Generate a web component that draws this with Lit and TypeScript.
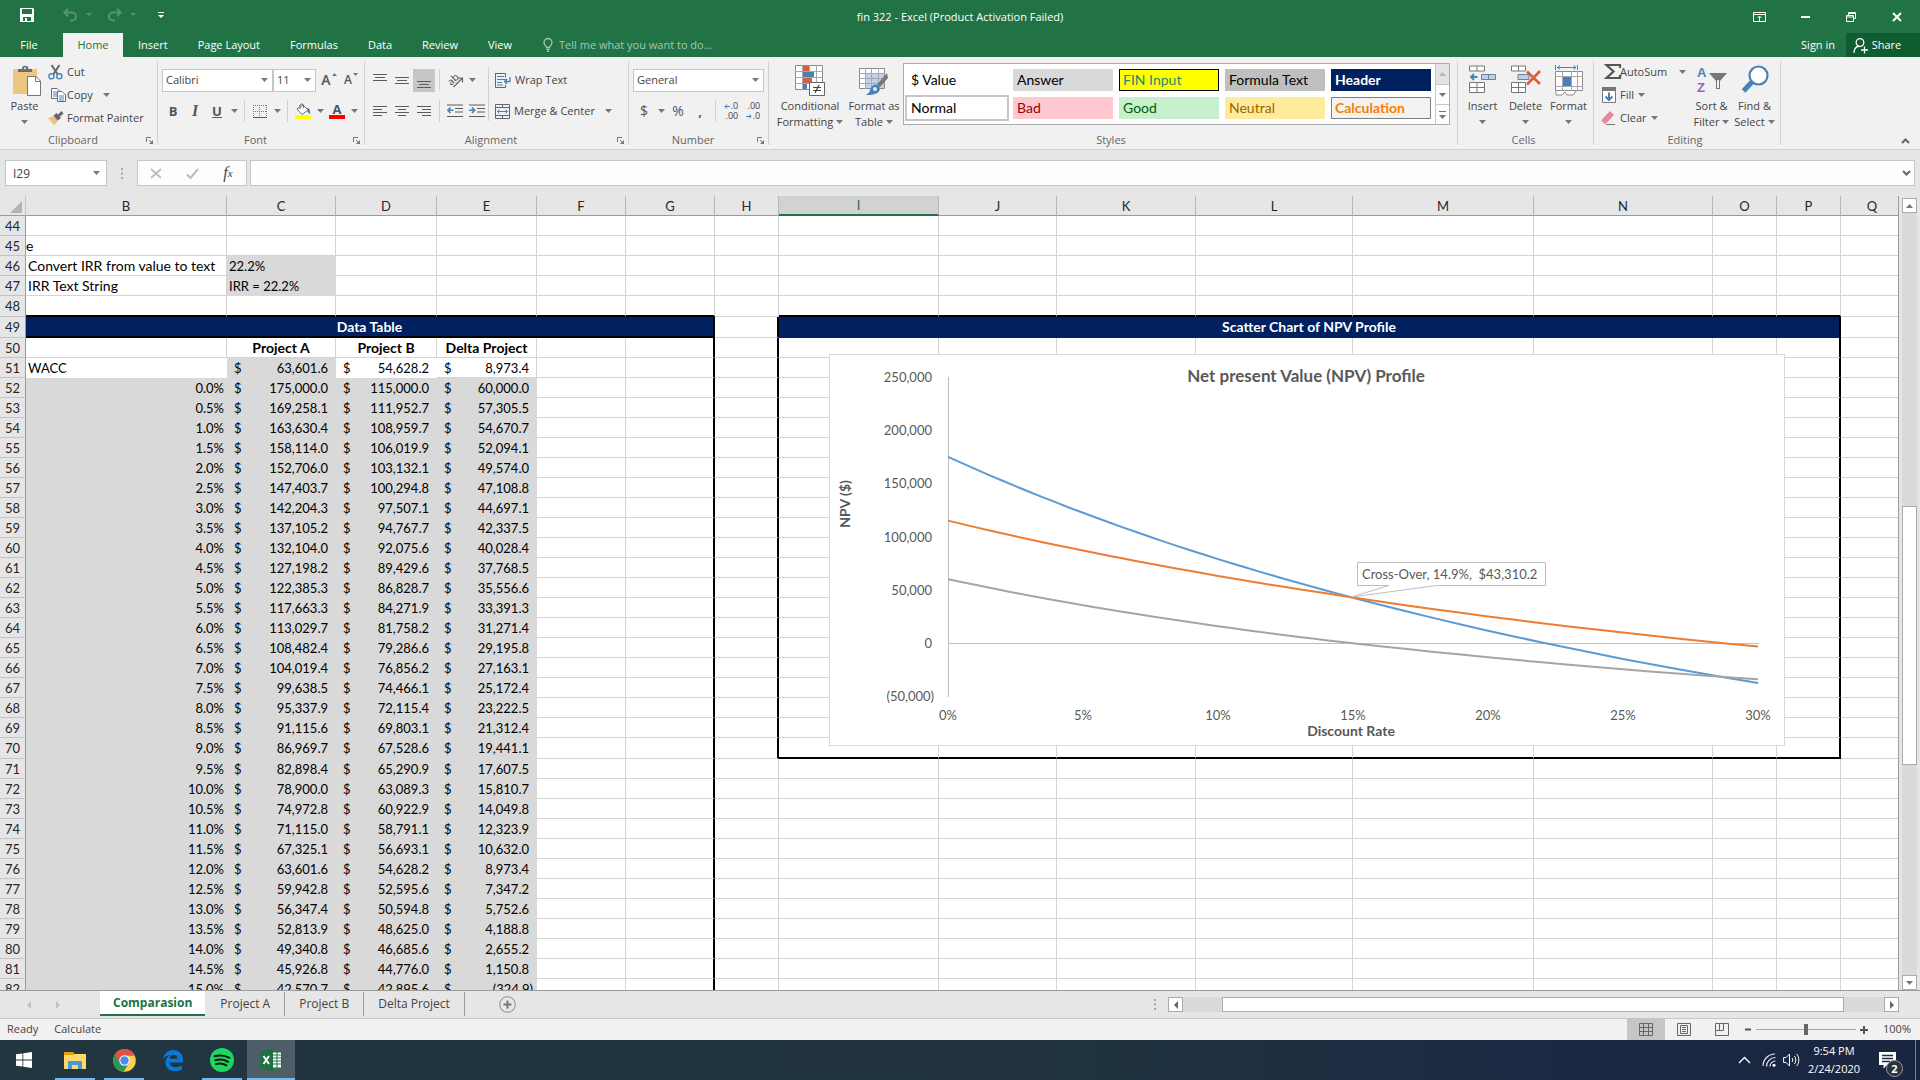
import { LitElement, html, svg, css, nothing } from "lit";
import { customElement } from "lit/decorators.js";
import { classMap } from "lit/directives/class-map.js";

const pic = (w: number, h: number, body: unknown) =>
  html`<svg class="pic" width=${w} height=${h} viewBox="0 0 ${w} ${h}" fill="none" aria-hidden="true">${body}</svg>`;

const G = "#6a6a6a";
const B = "#4a80b8";
const arrow = pic(7, 4, svg`<path d="M0 0h7L3.5 4z" fill="#777"/>`);
const lines = (spec: number[][], h = 17) =>
  pic(16, h, svg`${spec.map(([x, y, w]) => svg`<rect x=${x} y=${y} width=${w} height="1" fill="#5c5c5c"/>`)}`);

const I = {
  save: pic(14, 14, svg`<path fill-rule="evenodd" fill="#fff" d="M0 0h13l1 1v13H0zM2 1v5h10V1zM3 9v4h2v-3h2v3h4V9z"/>`),
  undo: pic(15, 13, svg`<path d="M1 4.5h8a4 4 0 0 1 0 8H7M5 .8L1.3 4.5 5 8.2" stroke="#569372" stroke-width="2"/>`),
  redo: pic(15, 13, svg`<path d="M14 4.5H6a4 4 0 0 0 0 8h2M10 .8l3.700 3.700L10 8.200" stroke="#569372" stroke-width="2"/>`),
  dimArrow: pic(6, 3, svg`<path d="M0 0h6L3 3z" fill="#569372"/>`),
  custom: pic(6, 6, svg`<path d="M0 0h6v1H0zM0 3h6L3 6z" fill="#fff"/>`),
  display: pic(13, 10, svg`<path d="M.5.5h12v9H.5zM.5 2.500h12M6.500 9V4.500M4.500 6l2-2 2 2" stroke="#fff"/>`),
  min: pic(9, 2, svg`<path d="M0 0h9v2H0z" fill="#fff"/>`),
  restore: pic(10, 10, svg`<path d="M.5 3.500h7v6h-7zM.5 5h7M2.500 3V.5h7v6H8M2.500 1.500h7" stroke="#fff"/>`),
  close: pic(10, 10, svg`<path d="M1 1l8 8M9 1L1 9" stroke="#fff" stroke-width="2"/>`),
  bulb: pic(10, 14, svg`<path d="M3.500 9.500C3.500 8 1 7 1 4.500a4 4 0 0 1 8 0C9 7 6.500 8 6.500 9.500zM3.500 11.500h3M4 13.400h2" stroke="#a2c9b2" stroke-width="1.300"/>`),
  person: pic(15, 15, svg`<circle cx="7" cy="4.500" r="3.800" stroke="#fff" stroke-width="1.300"/><path d="M1 15c0-4 2-6.500 5-6.700M8 12h7M11.500 8.500v7" stroke="#fff" stroke-width="1.300"/>`),
  paste: pic(30, 31, svg`<path d="M1 4h24v25H1z" fill="#edc77f"/><path d="M6 7V4h4a3.200 3.200 0 0 1 6.400 0H20v3z" fill="#6d6d6d"/><circle cx="13" cy="3.300" r="1" fill="#f1f1f1"/><path d="M15.500 11.500h8.500l4.500 4.500v14.500h-13z" fill="#fff" stroke="#777"/><path d="M23.500 11.500v5h5" stroke="#777"/>`),
  cut: pic(15, 16, svg`<path d="M3.500 1l6 9M11.500 1l-6 9" stroke="#666" stroke-width="2"/><circle cx="3.500" cy="12.300" r="2.600" stroke=${B} stroke-width="1.400"/><circle cx="11.300" cy="12.300" r="2.600" stroke=${B} stroke-width="1.400"/>`),
  copy: pic(15, 14, svg`<path d="M.5.5h5.500l3 3v7H.5z" fill="#fff" stroke=${G}/><path d="M2 4h4M2 6h4M2 8h4" stroke=${B}/><path d="M6.500 3.500h4.500l3.500 3.500v6.500h-8z" fill="#fff" stroke=${G}/><path d="M8 8h5M8 10h5M8 12h5" stroke=${B}/>`),
  painter: pic(16, 14, svg`<path d="M0 7l6-2 4 5-4 4z" fill="#edc084"/><path d="M5.500 4.500l3-2.500 4.500 5-3.500 2.500z" fill="#666"/><path d="M9.500 4l4-4 2 2.500-4.500 4z" fill="#666"/>`),
  borders: pic(14, 13, svg`<path d="M.5 0v12M6.500 0v12M13.500 0v12M0 .5h14M0 6.500h14" stroke="#777" stroke-dasharray="1 1"/><path d="M0 12.500h14" stroke="#555"/>`),
  fill: pic(16, 16, svg`<path d="M2 6l6-4 5 5-6 4.500z" fill="#fff" stroke="#666"/><path d="M5 6V2a2 2 0 0 1 3.500 0v3" stroke="#666"/><path d="M12 5c3 0 3.500 3 3 6-1.500-.5-2-2-3-3z" fill=${B}/><path d="M0 12h16v4H0z" fill="#ff0"/>`),
  orient: pic(17, 16, svg`<path d="M6.500 15L15 6.500M11 6h4.500v4.500" stroke="#666" stroke-width="1.200"/><text x="1" y="12" transform="rotate(-45 5 9)" font-size="10" font-family="Open Sans, sans-serif" fill="#444">ab</text>`),
  outdent: pic(16, 14, svg`<path d="M0 1h16M8 4.500h8M8 8h8M0 12.500h16" stroke="#5c5c5c"/><path d="M6.500 6.300H1M3.500 3.500L.8 6.300l2.700 2.700" stroke=${B} stroke-width="1.600"/>`),
  indent: pic(16, 14, svg`<path d="M0 1h16M8 4.500h8M8 8h8M0 12.500h16" stroke="#5c5c5c"/><path d="M0 6.300h5.500M3 3.500l2.700 2.800L3 9" stroke=${B} stroke-width="1.600"/>`),
  wrap: pic(16, 15, svg`<path d="M.5.500h10v4M.5 0v14.500h10V12" stroke="#666"/><path d="M2 3.500h7M2 6.500h9M2 9.500h5M2 12h6" stroke=${B}/><path d="M15 4v4.500H9.500M12 6L9.500 8.500 12 11" stroke=${B} stroke-width="1.300"/>`),
  merge: pic(15, 15, svg`<path d="M.5.500h14v14H.5zM.5 3.500h14M.5 11.500h14M7.500 0v3.500M7.500 11.500V15" stroke="#666"/><path d="M2.500 7.500h10M4.500 5.500l-2 2 2 2M10.500 5.500l2 2-2 2" stroke=${B}/>`),
  launcher: pic(7, 7, svg`<path d="M.5 5V.5H5M3 3l3 3" stroke="#777"/><path d="M7 3v4H3z" fill="#777"/>`),
  cond: pic(30, 31, svg`<path d="M.5.500h27v24H.5z" fill="#fff" stroke="#8a8a8a"/><path d="M7.500 0v25M14.500 0v25M21.500 0v25M0 6.500h28M0 12.500h28M0 18.500h28" stroke="#a8a8a8"/><path d="M8 1h6v5H8zM8 13h9v5H8z" fill="#d95f3c"/><path d="M8 7h11v5H8zM8 19h4v5H8z" fill=${B}/><path d="M14.500 17.500h15v13h-15z" fill="#fff" stroke="#666"/><path d="M18 22.500h8M18 25.500h8M24 20l-4 8" stroke="#444" stroke-width="1.200"/>`),
  fmtTable: pic(30, 31, svg`<path d="M.5 3.500h25v20H.5z" fill="#fff" stroke="#8a8a8a"/><path d="M7 9h18v14H7z" fill="#bdd2ea"/><path d="M6.500 3v21M12.500 3v21M19.500 3v21M0 8.500h26M0 13.500h26M0 18.500h26" stroke="#a0a8b0"/><path d="M28 8l1 5-8 9-3-2.500z" fill="#777"/><path d="M17 19.500c3 1 4.500 3 3.500 6-2 4-9 5-14 4.500 3-1 4-3 5-6 1-3 3-4.500 5.500-4.500z" fill=${B}/><circle cx="16" cy="24" r="2" fill="#dce9f6"/>`),
  insert: pic(27, 28, svg`<path d="M.5 1h15v5H.5zM8 1v5M.5 17.500h15v10H.5zM8 17.500v10M.5 22.500h15" fill="#fff" stroke="#777"/><path d="M12.500 9.500h14v5h-14zM19.500 9.500v5" fill="#bdd2ea" stroke="#6a7f99"/><path d="M8.500 12H2M5 9l-3 3 3 3" stroke=${B} stroke-width="1.800"/>`),
  del: pic(30, 28, svg`<path d="M.5 1h14v5H.5zM7.500 1v5M.5 17.500h14v10H.5zM7.500 17.500v10M.5 22.500h14" fill="#fff" stroke="#777"/><path d="M7 9.500h11v5H7z" fill="#bdd2ea" stroke="#6a7f99"/><path d="M16 6.500l13 12.500M29 6L16 19.500" stroke="#dc5c3c" stroke-width="2.600"/>`),
  format: pic(28, 31, svg`<path d="M.5 0v5M22.500 0v5M2 2.500h19M5 .5l-2.500 2L5 4.500M18.500.5l2.500 2-2.500 2" stroke=${B}/><path d="M.5 6.500h27v19H.5z" fill="#fff" stroke="#8a8a8a"/><path d="M7.500 6v20M16.500 6v20M22.500 6v20M0 11.500h28M0 21.500h28" stroke="#a8a8a8"/><path d="M8 12h8v9H8z" fill=${B}/><path d="M1 26v4h6l3-3 2 3h6l3-4" fill="#fff" stroke="#8a8a8a"/>`),
  sigma: pic(16, 15, svg`<path d="M15 4V1H1.500l7 6.500-7 6.500H15v-3" stroke="#555" stroke-width="2.200"/>`),
  fillDown: pic(14, 16, svg`<path d="M.5.500h13v15H.5z" fill="#fff" stroke="#777"/><path d="M0 0h14v4H0z" fill="#777"/><path d="M7 5.500v7.500M3.500 9.500L7 13l3.500-3.500" stroke=${B} stroke-width="2"/>`),
  clear: pic(15, 14, svg`<path d="M0 9.500L9 0l4 4-8.500 9H3z" fill="#e8869b"/><path d="M0 9.500l4 3.500" stroke="#f6c5cf"/><path d="M5 13.500h9" stroke="#777"/>`),
  sort: pic(30, 31, svg`<text x="0" y="12" font-size="13" font-weight="700" font-family="Liberation Sans, sans-serif" fill=${B}>A</text><text x="0" y="27" font-size="13" font-weight="700" font-family="Liberation Sans, sans-serif" fill="#9465b8">Z</text><path d="M12 8h18l-7 8v8h-4v-8z" fill="#777"/><path d="M20 15h2v8h-2z" fill="#f1f1f1"/>`),
  find: pic(28, 31, svg`<circle cx="17.500" cy="10.500" r="9" fill="#fff" stroke=${B} stroke-width="2.200"/><path d="M11 17L2.500 26" stroke=${B} stroke-width="5"/>`),
  chevUp: pic(9, 6, svg`<path d="M1 5l3.500-3.500L8 5" stroke="#666" stroke-width="2"/>`),
  chevDown: pic(9, 6, svg`<path d="M1 1l3.500 3.500L8 1" stroke="#666" stroke-width="2"/>`),
  cancel: pic(12, 11, svg`<path d="M1 1l10 9M11 1L1 10" stroke="#bdbdbd" stroke-width="1.800"/>`),
  check: pic(13, 11, svg`<path d="M1 6.500L4.500 10 12 1" stroke="#bdbdbd" stroke-width="2"/>`),
  up: pic(7, 4, svg`<path d="M0 4h7L3.500 0z" fill="#777"/>`),
  upDim: pic(7, 4, svg`<path d="M0 4h7L3.500 0z" fill="#b8b8b8"/>`),
  more: pic(7, 8, svg`<path d="M0 0h7v1H0zM0 4h7L3.500 8z" fill="#777"/>`),
  left: pic(4, 8, svg`<path d="M4 0v8L0 4z" fill="#666"/>`),
  right: pic(4, 8, svg`<path d="M0 0v8l4-4z" fill="#666"/>`),
  leftDim: pic(4, 8, svg`<path d="M4 0v8L0 4z" fill="#c0c0c0"/>`),
  rightDim: pic(4, 8, svg`<path d="M0 0v8l4-4z" fill="#c0c0c0"/>`),
  dots: pic(2, 11, svg`<path d="M0 0h2v2H0zM0 4.500h2v2H0zM0 9h2v2H0z" fill="#a6a6a6"/>`),
  plus: pic(17, 17, svg`<circle cx="8.500" cy="8.500" r="7.800" stroke="#888"/><path d="M8.500 4.500v8M4.500 8.500h8" stroke="#777" stroke-width="2"/>`),
  zoomOut: pic(7, 7, svg`<path d="M0 3.500h6" stroke="#555" stroke-width="2"/>`),
  zoomIn: pic(8, 8, svg`<path d="M0 4h8M4 0v8" stroke="#555" stroke-width="2"/>`),
  viewGrid: pic(14, 13, svg`<path d="M.5.500h13v12H.5zM.5 4.500h13M.5 8.500h13M4.500.5v12M9.500.5v12" stroke="#666"/>`),
  viewPage: pic(14, 13, svg`<path d="M.5.500h13v12H.5zM3.500 2.500h7v8h-7zM5 4.500h4M5 6.500h4M5 8.500h4" stroke="#666"/>`),
  viewBreak: pic(14, 13, svg`<path d="M.5.500h13v12H.5zM.5 7.500h8V.5M4.500.5v7" stroke="#666"/>`),
  windows: pic(16, 16, svg`<path fill="#fff" d="M0 2.300l6.500-.9v6.200H0zM7.300 1.300L16 0v7.600H7.300zM0 8.400h6.500v6.200L0 13.700zM7.300 8.400H16V16l-8.700-1.200z"/>`),
  folder: pic(22, 19, svg`<path d="M0 1h9l1 2h12v15H0z" fill="#ffd869"/><path d="M0 1h9l1 3H0z" fill="#e0a00f"/><path d="M4 18v-7a1 1 0 0 1 1-1h12a1 1 0 0 1 1 1v7h-4v-4H8v4z" fill="#4699d9"/>`),
  chrome: pic(23, 23, svg`<circle cx="11.500" cy="11.500" r="11.300" fill="#fcce4a"/><path d="M11.500 11.500L1.600 6A11.300 11.300 0 0 0 10.500 22.700L16 14z" fill="#25995a"/><path d="M1.600 6a11.300 11.300 0 0 1 20.300.8H11.500l-4.500 7z" fill="#de5145"/><circle cx="11.500" cy="11.500" r="5.200" fill="#fff"/><circle cx="11.500" cy="11.500" r="4.200" fill="#4a8af4"/>`),
  edge: pic(20, 21, svg`<path fill="#0a78d6" d="M0 9.500C.8 3.800 4.800 0 10.300 0 16.300 0 20 4.200 20 10v2.500H6.500c.2 3.300 3 4.700 6.300 4.700 2.200 0 4.200-.6 6-1.600v4c-2 1-4.300 1.500-7 1.500-5.600 0-9.300-3.300-9.300-8.300 0-3.600 1.800-6.300 5-7.800C3.900 5.500 1.400 7 0 9.500zM6.600 8.800h7.900c0-2.600-1.300-4.100-3.700-4.100-2.300 0-3.900 1.500-4.200 4.100z"/>`),
  spotify: pic(24, 24, svg`<circle cx="12" cy="12" r="12" fill="#1ed760"/><path d="M4.500 8.300c5-1.500 10.500-1 15 1.500M5.300 12.300c4.300-1.200 9-.7 12.800 1.500M6 16c3.700-1 7.500-.5 10.500 1.300" stroke="#0c1a12" stroke-width="2" stroke-linecap="round"/>`),
  excel: pic(22, 22, svg`<path d="M12 3h9.500v16H12z" fill="#fff" stroke="#217346"/><path d="M13 6h8M13 9h8M13 12h8M13 15h8M17 3v16" stroke="#217346"/><path d="M0 2.500L13 0v22L0 19.500z" fill="#1e7145"/><path d="M3.500 7l5.500 8M9 7l-5.500 8" stroke="#fff" stroke-width="1.900"/>`),
  trayUp: pic(13, 8, svg`<path d="M1 7l5.500-5.500L12 7" stroke="#fff" stroke-width="1.300"/>`),
  wifi: pic(14, 14, svg`<path d="M1 13A12 12 0 0 1 13 1M4.500 13.500a9 9 0 0 1 9-9M8 13.500a5.500 5.500 0 0 1 5.500-5.500" stroke="#e6e9ee" stroke-width="1.200"/><circle cx="12" cy="12.300" r="1.500" fill="#fff"/>`),
  sound: pic(17, 14, svg`<path d="M.6 4.500h2.500L6.500 1v12L3.100 9.500H.6z" stroke="#fff"/><path d="M9 5c1 1.200 1 2.800 0 4M11.300 3c2 2.300 2 5.700 0 8M13.600 1c3 3.300 3 8.700 0 12" stroke="#fff"/>`),
  note: pic(17, 17, svg`<path d="M0 0h17v13H8l-3.500 3.500V13H0z" fill="#fff"/><path d="M3 3.500h11M3 6.500h11M3 9.500h8" stroke="#1c2b40" stroke-width="1.300"/>`),
};

const RATES: [string, string, string, string][] = [
  ["0.0%", "175,000.0", "115,000.0", "60,000.0"],
  ["0.5%", "169,258.1", "111,952.7", "57,305.5"],
  ["1.0%", "163,630.4", "108,959.7", "54,670.7"],
  ["1.5%", "158,114.0", "106,019.9", "52,094.1"],
  ["2.0%", "152,706.0", "103,132.1", "49,574.0"],
  ["2.5%", "147,403.7", "100,294.8", "47,108.8"],
  ["3.0%", "142,204.3", "97,507.1", "44,697.1"],
  ["3.5%", "137,105.2", "94,767.7", "42,337.5"],
  ["4.0%", "132,104.0", "92,075.6", "40,028.4"],
  ["4.5%", "127,198.2", "89,429.6", "37,768.5"],
  ["5.0%", "122,385.3", "86,828.7", "35,556.6"],
  ["5.5%", "117,663.3", "84,271.9", "33,391.3"],
  ["6.0%", "113,029.7", "81,758.2", "31,271.4"],
  ["6.5%", "108,482.4", "79,286.6", "29,195.8"],
  ["7.0%", "104,019.4", "76,856.2", "27,163.1"],
  ["7.5%", "99,638.5", "74,466.1", "25,172.4"],
  ["8.0%", "95,337.9", "72,115.4", "23,222.5"],
  ["8.5%", "91,115.6", "69,803.1", "21,312.4"],
  ["9.0%", "86,969.7", "67,528.6", "19,441.1"],
  ["9.5%", "82,898.4", "65,290.9", "17,607.5"],
  ["10.0%", "78,900.0", "63,089.3", "15,810.7"],
  ["10.5%", "74,972.8", "60,922.9", "14,049.8"],
  ["11.0%", "71,115.0", "58,791.1", "12,323.9"],
  ["11.5%", "67,325.1", "56,693.1", "10,632.0"],
  ["12.0%", "63,601.6", "54,628.2", "8,973.4"],
  ["12.5%", "59,942.8", "52,595.6", "7,347.2"],
  ["13.0%", "56,347.4", "50,594.8", "5,752.6"],
  ["13.5%", "52,813.9", "48,625.0", "4,188.8"],
  ["14.0%", "49,340.8", "46,685.6", "2,655.2"],
  ["14.5%", "45,926.8", "44,776.0", "1,150.8"],
  ["15.0%", "42,570.7", "42,895.6", "(324.9)"],
];

/* Values of each series at 15, 20, 25 and 30 percent, for the part below the listed rates. */
const TAILS = [
  [42570.7, 11600, -14900, -37500],
  [42895.6, 25000, 9800, -3400],
  [-324.9, -13400, -24700, -34100],
];
const SERIES_COLOR = ["#5b9bd5", "#ed7d31", "#a5a5a5"];

const toNumber = (s: string) =>
  s.startsWith("(") ? -Number(s.replace(/[(),]/g, "")) : Number(s.replace(/,/g, ""));

const cubic = (v: number[], t: number) =>
  v.reduce((sum, y, i) => {
    let k = y;
    for (let j = 0; j < 4; j++) if (j !== i) k *= (t - j) / (i - j);
    return sum + k;
  }, 0);

const px = (rate: number) => 118 + rate * 27;
const py = (npv: number) => 288 - (npv / 50000) * 53.2;

function seriesPoints(n: number): string {
  const pts = RATES.map((r, i) => `${px(i / 2)},${py(toNumber(r[n + 1])).toFixed(1)}`);
  for (let r = 16; r <= 30; r++) pts.push(`${px(r)},${py(cubic(TAILS[n], (r - 15) / 5)).toFixed(1)}`);
  return pts.join(" ");
}

const COLS: [string, number][] = [
  ["B", 201], ["C", 109], ["D", 101], ["E", 100], ["F", 89], ["G", 89], ["H", 64], ["I", 160],
  ["J", 118], ["K", 139], ["L", 157], ["M", 181], ["N", 179], ["O", 64], ["P", 64], ["Q", 0],
];

@customElement("npv-chart")
export class NpvChart extends LitElement {
  static styles = css`
    :host { display: block; background: #fff; border: 1px solid #d9d9d9; box-sizing: border-box; }
    svg { display: block; }
    text { font-family: Lato, "Liberation Sans", sans-serif; font-size: 13px; fill: #595959; }
    .title { font-size: 17px; font-weight: 700; }
    .axis { font-weight: 700; font-size: 14px; }
  `;

  render() {
    const ticks = [250000, 200000, 150000, 100000, 50000, 0];
    return html`<svg width="954" height="390" viewBox="0 0 954 390" role="img" aria-label="Net present Value (NPV) Profile">
      <path d="M118.500 22v320M119 288.500h810" stroke="#bfbfbf" fill="none"/>
      ${ticks.map((t) => svg`<text x="102" y=${Math.round(py(t)) + 5} text-anchor="end">${t.toLocaleString("en-US")}</text>`)}
      <text x="104" y="346" text-anchor="end">(50,000)</text>
      ${[0, 5, 10, 15, 20, 25, 30].map((t) => svg`<text x=${px(t)} y="365" text-anchor="middle">${t}%</text>`)}
      <text class="axis" x="521" y="381" text-anchor="middle">Discount Rate</text>
      <text class="axis" x="0" y="0" transform="translate(20 149) rotate(-90)" text-anchor="middle">NPV ($)</text>
      <text class="title" x="476" y="27" text-anchor="middle">Net present Value (NPV) Profile</text>
      ${[0, 1, 2].map((n) => svg`<polyline points=${seriesPoints(n)} fill="none" stroke=${SERIES_COLOR[n]} stroke-width="2"/>`)}
      <path d="M527.500 207.500h188v23h-109L521.500 242l37.500-11.500h-31.500z" fill="#fff" stroke="#bfbfbf"/>
      <text x="532" y="224" xml:space="preserve">Cross-Over, 14.9%,  $43,310.2</text>
    </svg>`;
  }
}

@customElement("app-root")
export class AppRoot extends LitElement {
  static styles = css`
    :host {
      display: flex; flex-direction: column; height: 100vh; overflow: hidden;
      font: 12px/16px "Open Sans", "Liberation Sans", sans-serif; color: #444; background: #e6e6e6;
    }
    * { box-sizing: border-box; }
    .pic { display: block; flex: none; overflow: visible; }
    button { font: inherit; color: inherit; background: none; border: 0; padding: 0; margin: 0; display: flex; align-items: center; justify-content: center; white-space: nowrap; }
    input, select { font: inherit; color: inherit; border: 0; border-radius: 0; background: transparent; padding: 0; margin: 0; appearance: none; outline: 0; min-width: 0; }
    .grow { flex: 1; }

    .title { flex: none; height: 33px; background: #217346; color: #fff; display: grid; grid-template-columns: 1fr auto 1fr; align-items: center; font-size: 11px; }
    .quick { display: flex; align-items: center; padding: 0 0 4px 20px; height: 28px; gap: 15px; }
    .pair { display: flex; align-items: center; gap: 8px; }
    .quick .wide { margin-left: 14px; }
    .quick .last { margin-left: 7px; }
    .wins { display: flex; justify-content: flex-end; }
    .wins button { width: 46px; height: 28px; }
    .tabs { flex: none; height: 24px; background: #217346; color: #fff; display: flex; font-size: 11px; }
    .tabs button { padding: 0 15px; }
    .tabs .file { width: 63px; padding: 0 5px 0 0; }
    .tabs .home { background: #f1f1f1; color: #217346; width: 60px; padding: 0; }
    .tell { display: flex; align-items: center; gap: 6px; padding-left: 16px; color: #a2c9b2; }
    .tell input { width: 220px; }
    .tell input::placeholder { color: #a2c9b2; opacity: 1; }
    .tabs .share { background: #0e5c2f; width: 74px; gap: 4px; padding: 0 12px 0 0; }
    .tabs .sign { padding: 0 11px; }

    .ribbon { flex: none; height: 93px; background: #f1f1f1; border-bottom: 1px solid #d2d2d2; display: flex; padding: 4px 0; font-size: 11px; }
    .group { flex: none; border-right: 1px solid #d2d2d2; display: flex; flex-direction: column; }
    .body { display: flex; height: 75px; }
    .foot { display: flex; height: 10px; line-height: 10px; color: #666; padding-right: 4px; }
    .foot span { flex: 1; text-align: center; }
    .w-clip { width: 158px; } .w-font { width: 207px; } .w-align { width: 264px; } .w-num { width: 140px; }
    .w-style { width: 689px; } .w-cells { width: 136px; } .w-edit { width: 187px; }
    .w-cells .body { padding-left: 3px; }
    .w-clip .body { padding-left: 4px; }
    .big { flex-direction: column; justify-content: flex-start; padding-top: 4px; }
    .big .art { height: 33px; display: flex; }
    .big .line { display: flex; align-items: center; gap: 3px; height: 16px; }
    .b41 { width: 41px; } .b43 { width: 43px; } .b82 { width: 82px; } .b50 { width: 46px; }
    .rows { display: flex; flex-direction: column; }
    .small { height: 23px; gap: 4px; justify-content: flex-start; padding-bottom: 2px; }
    .small .slot { width: 15px; display: flex; justify-content: center; }
    .clip-rows { padding-left: 3px; }
    .copy .pic:last-child { margin-left: 6px; }
    .sum .pic:last-child { margin-left: 8px; }
    .two { display: flex; flex-direction: column; gap: 7px; padding-top: 7px; }
    .line2 { display: flex; align-items: center; height: 24px; }
    .t { width: 22px; height: 23px; }
    .a { width: 12px; height: 23px; }
    .on { background: #c6c6c6; }
    .sep { width: 1px; height: 22px; background: #d2d2d2; margin: 0 4px 0 0; }
    .sep.gap { margin: 0 4px; }
    .tall { width: 1px; height: 54px; margin: 6px 6px 0 0; background: #d2d2d2; }
    .glyph { font-size: 13px; font-weight: 700; color: #555; }
    .thin { font-weight: 400; font-size: 14px; }
    .i { font-style: italic; font-family: "Liberation Serif", serif; font-size: 16px; }
    .u { text-decoration: underline; }
    .inkA { display: flex; flex-direction: column; align-items: center; line-height: 12px; width: 16px; border-bottom: 4px solid #f00; font-weight: 700; font-size: 13px; color: #555; }
    .grown { align-items: flex-start; gap: 1px; color: #555; font-weight: 600; }
    .g1 { font-size: 14px; line-height: 22px; } .g2 { font-size: 12px; line-height: 22px; }
    .combo { display: grid; grid-template-columns: 1fr; align-items: center; height: 23px; background: #fff; border: 1px solid #c6c6c6; color: #444; }
    .combo > * { grid-area: 1 / 1; }
    .combo .pic { justify-self: end; margin-right: 4px; pointer-events: none; }
    .combo select, .combo input { width: 100%; height: 100%; padding-left: 3px; }
    .c-font { width: 111px; } .c-size { width: 43px; margin-right: 2px; } .c-num { width: 131px; }
    .font-two, .num-two { padding-left: 4px; }
    .p4 { padding-left: 4px; }
    .mg { gap: 4px; height: 24px; padding: 0; }
    .mg .pic:last-child:not(:first-child) { margin-left: 6px; }
    .dec { font-size: 9px; line-height: 8px; display: grid; justify-content: center; align-content: center; gap: 2px; color: #444; }
    .dec .row { display: flex; align-items: center; justify-content: flex-end; gap: 1px; height: 8px; }

    .gallery { margin: 2px 0 0 6px; height: 62px; display: flex; border: 1px solid #ababab; background: #fff; }
    .swatches { display: grid; grid-template-columns: repeat(5, 100px); grid-auto-rows: 22px; gap: 6px; padding: 5px 4px 0 3px; }
    .sw { justify-content: flex-start; padding-left: 4px; font: 14px/20px Lato, sans-serif; color: #000; }
    .answer { background: #d9d9d9; }
    .fin { background: #ff0; border: 1px solid #000; color: #1f8a70; padding-left: 3px; }
    .formula { background: #bfbfbf; }
    .header { background: #002060; color: #fff; font-weight: 700; }
    .normal { outline: 2px solid #c6c6c6; }
    .bad { background: #ffc7ce; color: #9c0006; }
    .good { background: #c6efce; color: #006100; }
    .neutral { background: #ffeb9c; color: #9c6500; }
    .calc { background: #f2f2f2; border: 1px solid #7f7f7f; color: #fa7d00; font-weight: 700; padding-left: 3px; }
    .galnav { width: 14px; display: grid; grid-template-rows: 1fr 1fr 1fr; border-left: 1px solid #c6c6c6; }
    .galnav button + button { border-top: 1px solid #c6c6c6; }
    .galnav .off { background: #e3e3e3; }
    .edit-rows { padding-left: 7px; width: 96px; }
    .collapse { align-self: flex-end; margin-left: auto; padding: 0 10px 1px 0; }

    .fbar { flex: none; display: flex; padding: 10px 5px; height: 46px; align-items: stretch; color: #444; }
    .name { width: 102px; height: 26px; padding-left: 4px; }
    .name .pic { margin-right: 6px; }
    .fdots { width: 30px; display: flex; align-items: center; justify-content: center; }
    .fx { width: 110px; background: #fdfdfd; border: 1px solid #c6c6c6; display: flex; margin-right: 3px; }
    .fx button { flex: 1; }
    .fx .f { font: italic 400 16px/20px "Liberation Serif", serif; color: #444; }
    .fx sub { font-size: 11px; line-height: 8px; }
    .entry { flex: 1; display: flex; align-items: center; background: #fdfdfd; border: 1px solid #c6c6c6; padding-right: 3px; }
    .entry input { flex: 1; height: 24px; padding-left: 4px; }

    .work { flex: 1; min-height: 0; display: grid; grid-template-columns: 1fr 21px; overflow: hidden; }
    .sheet { position: relative; overflow: hidden; border-right: 1px solid #9b9b9b; min-height: 0; }
    table { table-layout: fixed; width: calc(100% + 6px); border-collapse: separate; border-spacing: 0; background: #fff; font: 13px/16px Lato, "Liberation Sans", sans-serif; color: #000; }
    tr { height: 20px; }
    tr.h21 { height: 21px; }
    .rowhead { width: 26px; }
    th { font-weight: 400; background: #e6e6e6; padding: 0; color: #262626; border-right: 1px solid #b8b8b8; border-bottom: 1px solid #9b9b9b; }
    th.r { border-right-color: #9b9b9b; border-bottom-color: #c3c3c3; }
    th.sel { background: #d2d2d2; color: #217346; border-bottom: 2px solid #217346; }
    th.corner { border-right-color: #c3c3c3; }
    .corner svg { margin-left: 10px; margin-top: 2px; }
    td { padding: 0 2px; border-right: 1px solid #d4d4d4; border-bottom: 1px solid #d4d4d4; white-space: nowrap; overflow: hidden; }
    td.text, td.navy, td.head { font-size: 14px; }
    td.grey { background: #d9d9d9; border-color: transparent; }
    td.nb { border-color: transparent; }
    td.navy { background: #002060; color: #fff; font-weight: 700; text-align: center; border-color: #002060; }
    td.tight { padding: 0; }
    td.head { font-weight: 700; text-align: center; }
    td.num { text-align: right; }
    td.kr { border-right: 2px solid #000; }
    td.kb { border-bottom: 2px solid #000; }
    .money { display: flex; justify-content: space-between; padding: 0 5px; }
    .money.neg { padding-right: 1px; }
    npv-chart { position: absolute; left: 829px; top: 158px; width: 956px; height: 392px; }
    .vbar { padding: 2px 3px 0; display: flex; flex-direction: column; }
    .vbar button, .hbar button { background: #fff; border: 1px solid #ababab; flex: none; width: 15px; height: 15px; }
    .vtrack { flex: 1; background: #dadada; display: flex; flex-direction: column; }
    .vthumb { background: #fff; border: 1px solid #ababab; height: 34%; margin-top: 293px; }

    .sheets { flex: none; height: 29px; border-top: 1px solid #9b9b9b; border-bottom: 1px solid #c6c6c6; display: flex; align-items: flex-start; font-size: 12px; }
    .nav { display: flex; align-items: center; width: 100px; height: 27px; padding-left: 27px; gap: 25px; }
    .sheets .tab { height: 24px; padding: 0 14px; border-right: 1px solid #9b9b9b; margin-top: 1px; }
    .sheets .cur { margin: 0; padding: 0 13px; height: 25px; background: #fff; color: #217346; font-weight: 700; border-right: 0; border-bottom: 2px solid #217346; }
    .sheets .cur + .tab { padding-left: 15px; }
    .add { width: 86px; height: 26px; }
    .hbar { width: 766px; flex: none; display: flex; align-items: center; height: 27px; padding: 0 21px 0 0; }
    .hdots { width: 14px; flex: none; }
    .htrack { flex: 1; height: 15px; background: #dadada; display: flex; }
    .hthumb { width: 622px; margin-left: 39px; background: #fff; border: 1px solid #ababab; }

    .status { flex: none; height: 21px; background: #f1f1f1; display: flex; align-items: stretch; font-size: 11px; line-height: 20px; padding: 0 9px 0 7px; }
    .status .calcs { padding-left: 16px; }
    .status .v { width: 38px; }
    .status .z { width: 15px; }
    .zoom { width: 100px; height: 21px; background: linear-gradient(#a6a6a6, #a6a6a6) center / 100% 1px no-repeat; }
    .zoom::-webkit-slider-thumb { appearance: none; width: 4px; height: 11px; background: #666; }
    .pct { width: 40px; text-align: right; }

    .taskbar { flex: none; height: 40px; display: flex; color: #fff; background: linear-gradient(90deg, #21363f, #20333f 55%, #1a2843 85%, #1a2640); font-size: 12px; line-height: 18px; }
    .app { width: 48px; margin-right: 1px; }
    .start { width: 48px; margin-right: 3px; }
    .run { border-bottom: 2px solid #76b9ed; width: 40px; margin: 0 5px 0 4px; padding-top: 2px; }
    .active { background: #4d5e66; margin: 0; padding-top: 2px; border-bottom: 2px solid #76b9ed; }
    .tray { margin-left: auto; display: flex; align-items: center; }
    .tray > button { height: 40px; width: 23px; }
    .tray .first { width: 26px; }
    .tray .clock { flex-direction: column; width: 62px; font-size: 11px; }
    .tray .bell { position: relative; width: 44px; }
    .badge { position: absolute; left: 21px; top: 20px; width: 17px; height: 17px; border-radius: 50%; background: #2c333c; border: 1px solid #99a; font-size: 11px; line-height: 15px; font-weight: 700; }
    .peek { width: 5px; height: 40px; border-left: 1px solid #76808f; margin-left: 6px; }
  `;

  private foot(label: string, launcher = true) {
    return html`<div class="foot"><span>${label}</span>${launcher
      ? html`<button aria-label="${label} settings">${I.launcher}</button>` : nothing}</div>`;
  }

  private arrowButton(label: string) {
    return html`<button class="a" aria-label=${label}>${arrow}</button>`;
  }

  private big(cls: string, art: unknown, first: string, second = "") {
    return html`<button class="big ${cls}"><span class="art">${art}</span><span class="line">${first}</span>
      <span class="line">${second}${arrow}</span></button>`;
  }

  private ribbon() {
    return html`<section class="ribbon" aria-label="Ribbon">
      <div class="group w-clip"><div class="body">
        ${this.big("b41", html`<span class="p4">${I.paste}</span>`, "Paste")}
        <div class="rows clip-rows">
          <button class="small"><span class="slot">${I.cut}</span>Cut</button>
          <button class="small copy"><span class="slot">${I.copy}</span>Copy ${arrow}</button>
          <button class="small"><span class="slot">${I.painter}</span>Format Painter</button>
        </div></div>${this.foot("Clipboard")}</div>

      <div class="group w-font"><div class="body"><div class="two font-two">
        <div class="line2">
          <label class="combo c-font"><select aria-label="Font"><option>Calibri</option></select>${arrow}</label>
          <label class="combo c-size"><select aria-label="Font size"><option>11</option></select>${arrow}</label>
          <button class="t grown g1" aria-label="Increase font size">A${pic(5, 8, svg`<path d="M0 7h5L2.500 4z" fill=${B}/>`)}</button>
          <button class="t grown g2" aria-label="Decrease font size">A${pic(5, 8, svg`<path d="M0 4h5L2.500 7z" fill=${B}/>`)}</button>
        </div>
        <div class="line2">
          <button class="t glyph">B</button><button class="t glyph i">I</button><button class="t glyph u">U</button>
          ${this.arrowButton("Underline options")}<span class="sep gap"></span>
          <button class="t" aria-label="Borders">${I.borders}</button>${this.arrowButton("Border options")}<span class="sep gap"></span>
          <button class="t" aria-label="Fill color">${I.fill}</button>${this.arrowButton("Fill options")}
          <button class="t"><span class="inkA">A</span></button>${this.arrowButton("Font color options")}
        </div></div></div>${this.foot("Font")}</div>

      <div class="group w-align"><div class="body">
        <div class="two p4">
          <div class="line2">
            <button class="t" aria-label="Top align">${lines([[1, 2, 14], [3, 5, 10], [1, 8, 14]])}</button>
            <button class="t" aria-label="Middle align">${lines([[1, 5, 14], [3, 8, 10], [1, 11, 14]])}</button>
            <button class="t on" aria-label="Bottom align">${lines([[1, 9, 14], [3, 12, 10], [1, 15, 14]])}</button>
            <span class="sep gap"></span>
            <button class="t" aria-label="Orientation">${I.orient}</button>${this.arrowButton("Orientation options")}
          </div>
          <div class="line2">
            <button class="t" aria-label="Align left">${lines([[1, 3, 14], [1, 6, 9], [1, 9, 14], [1, 12, 9]])}</button>
            <button class="t" aria-label="Center">${lines([[1, 3, 14], [4, 6, 8], [1, 9, 14], [4, 12, 8]])}</button>
            <button class="t" aria-label="Align right">${lines([[1, 3, 14], [6, 6, 9], [1, 9, 14], [6, 12, 9]])}</button>
            <span class="sep gap"></span>
            <button class="t" aria-label="Decrease indent">${I.outdent}</button>
            <button class="t" aria-label="Increase indent">${I.indent}</button>
          </div>
        </div>
        <span class="tall sep-left"></span>
        <div class="two">
          <button class="small mg">${I.wrap}Wrap Text</button>
          <button class="small mg">${I.merge}Merge &amp; Center ${arrow}</button>
        </div></div>${this.foot("Alignment")}</div>

      <div class="group w-num"><div class="body"><div class="two num-two">
        <div class="line2"><label class="combo c-num"><select aria-label="Number format"><option>General</option></select>${arrow}</label></div>
        <div class="line2">
          <button class="t glyph thin">$</button>${this.arrowButton("Currency options")}
          <button class="t glyph thin">%</button><button class="t glyph">,</button><span class="sep gap"></span>
          <button class="t dec" aria-label="Increase decimal"><span class="row">${pic(6, 5, svg`<path d="M6 2.500H1M3 .5l-2 2 2 2" stroke=${B}/>`)}.0</span><span class="row">.00</span></button>
          <button class="t dec" aria-label="Decrease decimal"><span class="row">.00</span><span class="row">${pic(6, 5, svg`<path d="M0 2.500h5M3 .5l2 2-2 2" stroke=${B}/>`)}.0</span></button>
        </div></div></div>${this.foot("Number")}</div>

      <div class="group w-style"><div class="body">
        ${this.big("b82", I.cond, "Conditional", "Formatting")}
        ${this.big("b50", I.fmtTable, "Format as", "Table")}
        <div class="gallery">
          <div class="swatches">
            <button class="sw">$ Value</button><button class="sw answer">Answer</button><button class="sw fin">FIN Input</button>
            <button class="sw formula">Formula Text</button><button class="sw header">Header</button>
            <button class="sw normal">Normal</button><button class="sw bad">Bad</button><button class="sw good">Good</button>
            <button class="sw neutral">Neutral</button><button class="sw calc">Calculation</button>
          </div>
          <div class="galnav"><button class="off" aria-label="Previous styles">${I.upDim}</button>
            <button aria-label="Next styles">${arrow}</button><button aria-label="All styles">${I.more}</button></div>
        </div></div>${this.foot("Styles", false)}</div>

      <div class="group w-cells"><div class="body">
        ${this.big("b43", I.insert, "Insert")}${this.big("b43", I.del, "Delete")}${this.big("b43", I.format, "Format")}
      </div>${this.foot("Cells", false)}</div>

      <div class="group w-edit"><div class="body">
        <div class="rows edit-rows">
          <button class="small sum"><span class="slot">${I.sigma}</span>AutoSum ${arrow}</button>
          <button class="small"><span class="slot">${I.fillDown}</span>Fill ${arrow}</button>
          <button class="small"><span class="slot">${I.clear}</span>Clear ${arrow}</button>
        </div>
        ${this.big("b43", I.sort, "Sort &", "Filter")}${this.big("b43", I.find, "Find &", "Select")}
      </div>${this.foot("Editing", false)}</div>
      <button class="collapse" aria-label="Collapse ribbon">${I.chevUp}</button>
    </section>`;
  }

  private money(v: string) {
    return html`<div class=${classMap({ money: true, neg: v.startsWith("(") })}><span>$</span><span>${v}</span></div>`;
  }

  private blanks(row: number, from: number) {
    return COLS.slice(from).map(([c]) => {
      const panel = c >= "I" && c <= "P";
      const kr = (c === "G" && row >= 49) || ((c === "H" || c === "P") && row >= 49 && row <= 70);
      return html`<td class=${classMap({ kr, kb: panel && (row === 48 || row === 70) || (row === 48 && c <= "G") })}></td>`;
    });
  }

  private row(n: number) {
    const head = html`<th class="r" scope="row">${n}</th>`;
    const tall = n === 48 || n === 49 || n === 70;
    let cells: unknown;
    if (n === 45) cells = html`<td class="tight text">e</td>${this.blanks(n, 1)}`;
    else if (n === 46) cells = html`<td class="text">Convert IRR from value to text</td><td class="grey">22.2%</td>${this.blanks(n, 2)}`;
    else if (n === 47) cells = html`<td class="text">IRR Text String</td><td class="grey">IRR = 22.2%</td>${this.blanks(n, 2)}`;
    else if (n === 49)
      cells = html`<td class="navy kr kb" colspan="6">Data Table</td><td class="kr"></td>
        <td class="navy kr" colspan="8">Scatter Chart of NPV Profile</td><td></td>`;
    else if (n === 50)
      cells = html`<td></td><td class="head">Project A</td><td class="head">Project B</td><td class="head">Delta Project</td>${this.blanks(n, 4)}`;
    else if (n === 51)
      cells = html`<td class="nb">WACC</td><td class="grey">${this.money("63,601.6")}</td><td class="nb">${this.money("54,628.2")}</td>
        <td>${this.money("8,973.4")}</td>${this.blanks(n, 4)}`;
    else if (n >= 52) {
      const [rate, a, b, d] = RATES[n - 52];
      cells = html`<td class="grey num">${rate}</td>${[a, b, d].map((v) => html`<td class="grey">${this.money(v)}</td>`)}${this.blanks(n, 4)}`;
    } else cells = this.blanks(n, 0);
    return html`<tr class=${tall ? "h21" : ""}>${head}${cells}</tr>`;
  }

  render() {
    return html`
      <header class="title">
        <div class="quick"><button aria-label="Save">${I.save}</button>
          <span class="pair wide"><button aria-label="Undo">${I.undo}</button>${I.dimArrow}</span>
          <span class="pair"><button aria-label="Redo">${I.redo}</button>${I.dimArrow}</span>
          <button class="last" aria-label="Customize toolbar">${I.custom}</button></div>
        <span>fin 322 - Excel (Product Activation Failed)</span>
        <div class="wins"><button aria-label="Ribbon display">${I.display}</button><button aria-label="Minimize">${I.min}</button>
          <button aria-label="Restore">${I.restore}</button><button aria-label="Close">${I.close}</button></div>
      </header>
      <nav class="tabs">
        <button class="file">File</button><button class="home">Home</button>
        ${["Insert", "Page Layout", "Formulas", "Data", "Review", "View"].map((t) => html`<button>${t}</button>`)}
        <label class="tell">${I.bulb}<input aria-label="Tell me" placeholder="Tell me what you want to do..."></label>
        <span class="grow"></span><button class="sign">Sign in</button><button class="share">${I.person}Share</button>
      </nav>
      ${this.ribbon()}
      <div class="fbar">
        <label class="combo name"><input aria-label="Name box" value="I29">${arrow}</label>
        <span class="fdots">${I.dots}</span>
        <div class="fx"><button aria-label="Cancel">${I.cancel}</button><button aria-label="Enter">${I.check}</button>
          <button class="f">f<sub>x</sub></button></div>
        <label class="entry"><input aria-label="Formula">${I.chevDown}</label>
      </div>
      <main class="work">
        <div class="sheet">
          <table>
            <colgroup><col class="rowhead">${COLS.map(([, w]) => (w ? html`<col style="width:${w}px">` : html`<col>`))}</colgroup>
            <thead><tr><th class="corner" aria-label="Select all">${pic(12, 12, svg`<path d="M12 0v12H0z" fill="#b4b4b4"/>`)}</th>
              ${COLS.map(([c]) => html`<th scope="col" class=${c === "I" ? "sel" : ""}>${c}</th>`)}</tr></thead>
            <tbody>${Array.from({ length: 39 }, (_, i) => this.row(44 + i))}</tbody>
          </table>
          <npv-chart></npv-chart>
        </div>
        <div class="vbar"><button aria-label="Scroll up">${I.up}</button>
          <div class="vtrack"><div class="vthumb"></div></div>
          <button aria-label="Scroll down">${arrow}</button></div>
      </main>
      <div class="sheets">
        <div class="nav">${I.leftDim}${I.rightDim}</div>
        <button class="tab cur">Comparasion</button><button class="tab">Project A</button>
        <button class="tab">Project B</button><button class="tab">Delta Project</button>
        <button class="add" aria-label="New sheet">${I.plus}</button>
        <span class="grow"></span>
        <div class="hbar"><span class="hdots">${I.dots}</span><button aria-label="Scroll left">${I.left}</button>
          <div class="htrack"><div class="hthumb"></div></div><button aria-label="Scroll right">${I.right}</button></div>
      </div>
      <div class="status"><span>Ready</span><span class="calcs">Calculate</span><span class="grow"></span>
        <button class="v on" aria-label="Normal view">${I.viewGrid}</button><button class="v" aria-label="Page layout">${I.viewPage}</button>
        <button class="v" aria-label="Page break preview">${I.viewBreak}</button>
        <button class="z" aria-label="Zoom out">${I.zoomOut}</button><input class="zoom" type="range" aria-label="Zoom" min="0" max="200" value="100"><button class="z" aria-label="Zoom in">${I.zoomIn}</button>
        <span class="pct">100%</span></div>
      <footer class="taskbar">
        <button class="start" aria-label="Start">${I.windows}</button>
        <button class="app run" aria-label="Files">${I.folder}</button><button class="app run" aria-label="Chrome">${I.chrome}</button>
        <button class="app" aria-label="Edge">${I.edge}</button><button class="app run" aria-label="Spotify">${I.spotify}</button>
        <button class="app active" aria-label="Excel">${I.excel}</button>
        <div class="tray"><button class="first" aria-label="Hidden icons">${I.trayUp}</button><button aria-label="Network">${I.wifi}</button>
          <button aria-label="Volume">${I.sound}</button>
          <button class="clock"><span>9:54 PM</span><span>2/24/2020</span></button>
          <button class="bell" aria-label="Notifications">${I.note}<span class="badge">2</span></button><span class="peek"></span></div>
      </footer>`;
  }
}
